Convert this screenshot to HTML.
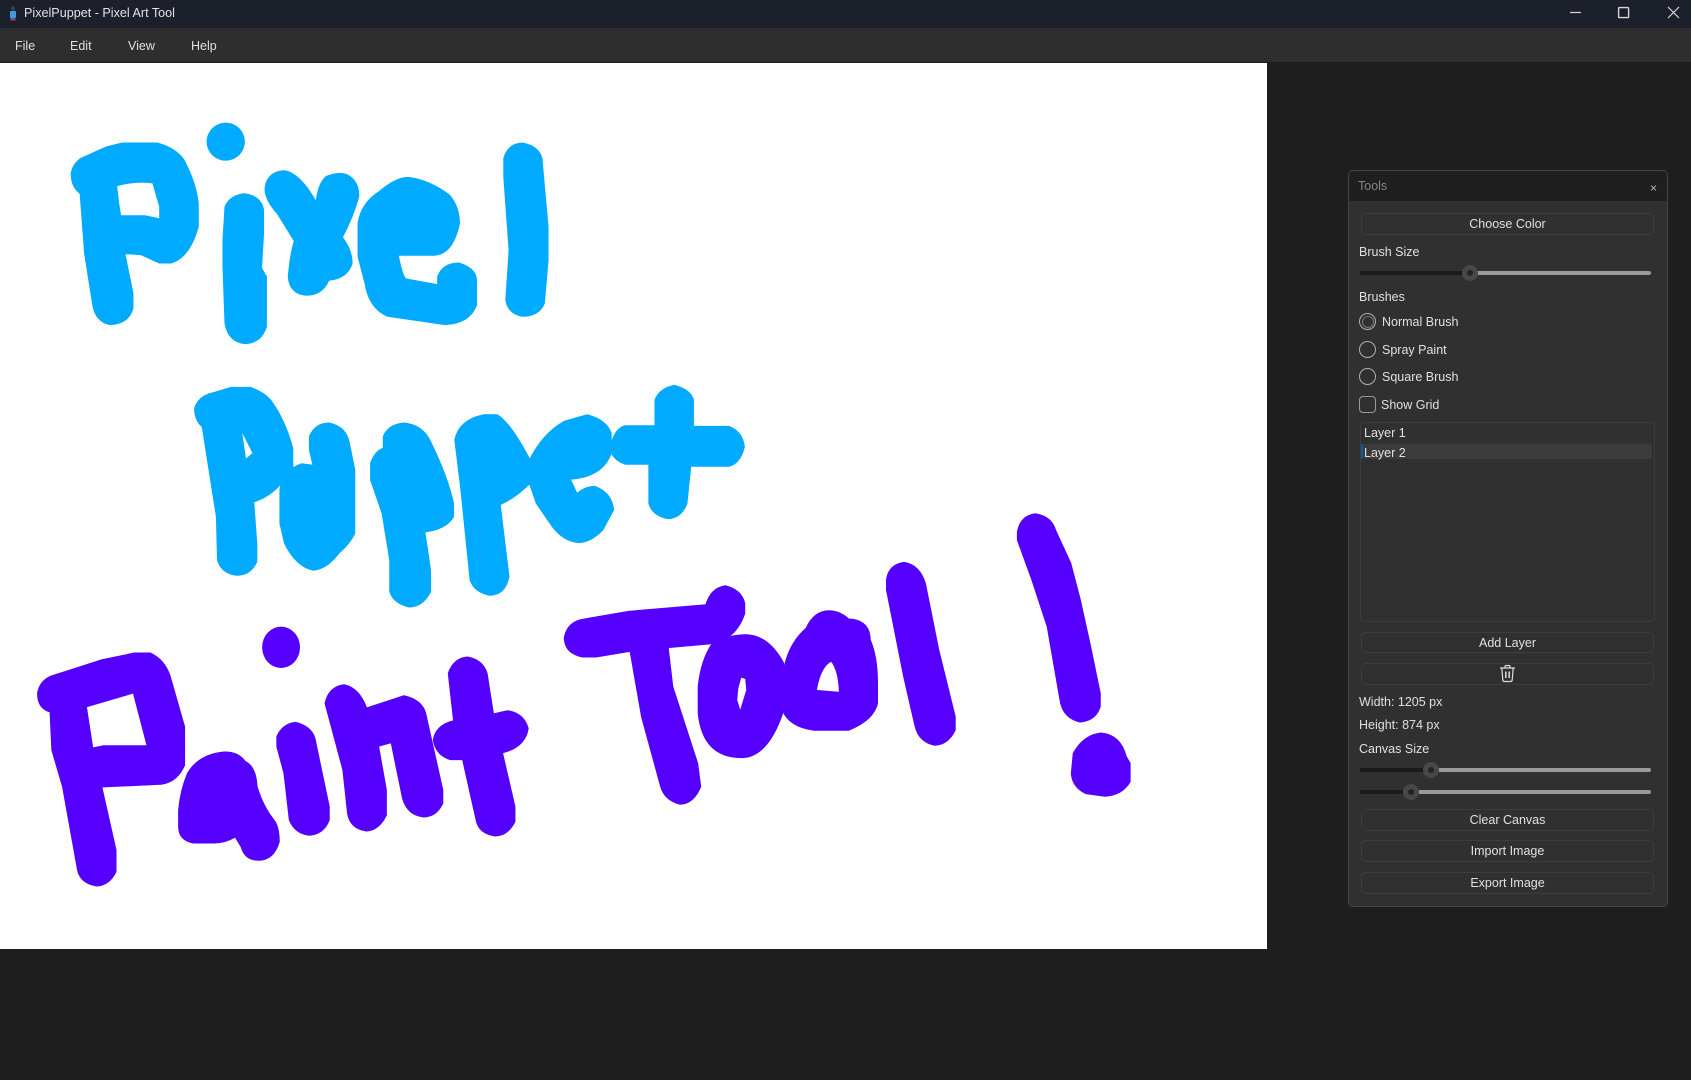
<!DOCTYPE html>
<html><head><meta charset="utf-8"><title>PixelPuppet - Pixel Art Tool</title>
<style>
html,body{margin:0;padding:0;width:1691px;height:1080px;overflow:hidden;background:#1e1e1e}
body{position:relative;font-family:"Liberation Sans",sans-serif;font-size:12.5px;color:#e0e0e0}
.a{position:absolute}
.t{position:absolute;line-height:18px;height:18px;white-space:nowrap}
.b{position:absolute;left:1361px;width:291px;border:1px solid #3d3d3d;border-radius:5px;text-align:center;box-sizing:content-box;background:#303030;color:#e0e0e0}
.r{position:absolute;left:1359px;width:15px;height:15px;border:1.5px solid #b0b0b0;border-radius:50%}
.g1{position:absolute;height:4px;background:#1b1b1b}
.g2{position:absolute;height:4px;background:#9a9a9a;border-radius:2px}
.th{position:absolute;width:16px;height:16px;border-radius:50%;background:#484848}
.th:after{content:"";position:absolute;left:5px;top:5px;width:6px;height:6px;border-radius:50%;background:#232323}
svg.c path{vector-effect:non-scaling-stroke;stroke-width:1.6;stroke-linejoin:round}
</style></head><body>
<div class="a" style="left:0;top:0;width:1691px;height:28px;background:#1b202b"></div>
<svg class="a" style="left:7px;top:5px" width="12" height="18" viewBox="0 0 12 18"><circle cx="6" cy="3.5" r="2.2" fill="#3a3f4a"/><rect x="3" y="6" width="6" height="7" rx="1" fill="#3d9be8"/><rect x="3.5" y="13" width="5" height="2.5" fill="#8a4a70"/></svg>
<div class="t" style="left:24px;top:4px;color:#e2e2e2;font-size:12.6px">PixelPuppet - Pixel Art Tool</div>
<svg class="a" style="left:1560px;top:0" width="131" height="28" viewBox="0 0 131 28" fill="none" stroke="#d8d8d8"><path d="M10 12.5H21" stroke-width="1.2"/><rect x="58.6" y="7.6" width="10" height="10" rx="1" stroke-width="1.4"/><path d="M108 7L119 18M119 7L108 18" stroke-width="1.2"/></svg>
<div class="a" style="left:0;top:28px;width:1691px;height:34px;background:#2e2e2e"></div>
<div class="a" style="left:0;top:62px;width:1691px;height:1px;background:#1a1a1a"></div>
<div class="t" style="left:15px;top:37px">File</div>
<div class="t" style="left:70px;top:37px">Edit</div>
<div class="t" style="left:128px;top:37px">View</div>
<div class="t" style="left:191px;top:37px">Help</div>

<svg class="a c" style="left:0;top:63px" width="1267" height="886" viewBox="0 63 1267 886">
<rect x="0" y="63" width="1267" height="886" fill="#fff"/>
<g transform="translate(0 60) scale(.40816 .33333)" fill="#00aaff" stroke="#00aaff" fill-rule="evenodd">
<path d="M300 250H385Q430 265 450 300Q480 370 485 430V500Q465 590 420 608H390L345 583L305 580L325 700V745Q315 790 270 793Q235 785 228 735L208 580L197 400Q175 380 175 340Q180 310 200 295L260 262ZM285 377Q330 360 375 368L392 440V478L355 468H295L290 430Z"/>
<ellipse cx="553" cy="245" rx="47" ry="57" stroke="none"/>
<path d="M600 402Q640 410 645 450V520L640 625L652 650V800Q640 848 600 850Q560 845 552 790L547 620V540L552 440Q565 405 600 402Z"/>
<path d="M697 333Q735 340 775 428Q780 370 800 350Q830 335 850 345Q880 365 878 410Q865 470 838 532Q862 570 862 610Q850 655 805 660Q790 705 750 705Q710 700 707 650Q712 580 722 543L680 460Q650 420 650 385Q655 335 697 333Z"/>
<path d="M1000 353Q1050 360 1100 405Q1125 440 1125 490Q1110 580 1065 585H975Q985 650 995 658L1073 675V650Q1085 610 1125 610Q1165 625 1167 660V735Q1150 790 1090 793L950 768Q905 745 895 670L878 590V490Q885 430 930 395Q970 353 1000 353Z"/>
<path d="M1280 250Q1320 260 1327 295L1342 500V600L1333 730Q1320 768 1280 768Q1245 760 1240 720L1248 570L1235 350V295Q1245 252 1280 250Z"/>
</g>
<g transform="translate(170 370) scale(.38271 .33333)" fill="#00aaff" stroke="#00aaff" fill-rule="evenodd">
<path d="M160 53H210Q250 70 265 95Q300 150 320 235V340L290 340Q260 380 218 395L226 520V575Q210 615 175 615Q135 610 125 570L122 440L85 170Q65 150 65 115Q75 80 110 70ZM185 175L218 250L197 270Z"/>
<path d="M345 282L375 287L365 240V200Q380 160 415 160Q460 170 468 220L482 300V490Q470 520 440 550Q410 595 375 600Q330 590 300 520L288 460V360Q295 300 345 282Z"/>
<path d="M610 160Q660 165 680 215Q725 320 740 400V440Q720 478 665 485L680 600V665Q660 710 625 710Q585 700 575 665V570L555 430L525 330V280Q535 245 558 235V200Q570 165 610 160Z"/>
<path d="M820 135H855Q890 160 940 270L940 340Q900 385 862 403L885 620Q875 675 835 675Q795 665 785 630L760 350L745 210Q755 150 820 135Z"/>
<path d="M1090 135Q1140 150 1152 190V250Q1130 320 1045 327L1063 372Q1085 350 1110 350Q1155 370 1158 420L1130 480Q1100 515 1070 517Q1030 515 1000 470L958 400L940 340V270Q975 190 1030 155Z"/>
<path d="M1318 47Q1360 60 1367 90V170H1460Q1495 185 1500 230Q1490 280 1460 288H1360L1350 400Q1335 445 1300 445Q1260 435 1252 400V282H1190Q1160 270 1150 240Q1160 175 1190 168H1268V90Q1280 55 1318 47Z"/>
</g>
<g transform="translate(20 610) scale(.35714 .33333)" fill="#5500ff" stroke="#5500ff" fill-rule="evenodd">
<path d="M320 130H365Q405 150 420 200L460 350V465Q440 515 395 522L228 530L268 720V785Q250 825 215 827Q170 820 162 780L120 530L90 420L85 305Q50 295 50 250Q55 215 85 200L230 150ZM185 290L318 248L357 408H235L203 415Z"/>
<ellipse cx="731" cy="112" rx="53" ry="62" stroke="none"/>
<path d="M570 427Q610 425 630 455Q660 470 663 530Q680 590 710 630Q725 650 725 695Q710 750 668 750Q630 750 620 710L603 680Q570 700 540 698H485Q445 690 445 650V600Q450 540 470 490Q500 435 570 427Z"/>
<path d="M772 338Q815 350 825 385L865 590V630Q850 672 810 675Q770 670 755 630L740 490L720 410V380Q735 342 772 338Z"/>
<path d="M908 225Q950 235 970 295L1075 258Q1125 270 1135 310L1183 540V580Q1165 620 1130 620Q1085 615 1072 565L1040 397L1003 408L1025 540V615Q1005 660 970 662Q925 655 918 610L905 480L855 280Q865 230 908 225Z"/>
<path d="M1253 142Q1295 150 1307 190L1325 313L1365 303Q1410 310 1422 355Q1415 410 1350 428L1385 590V635Q1365 677 1330 677Q1285 670 1278 630L1240 448H1205Q1165 435 1158 390Q1165 345 1215 333L1200 190Q1215 145 1253 142Z"/>
</g>
<g transform="translate(550 500) scale(.38271 .33333)" fill="#5500ff" stroke="#5500ff" fill-rule="evenodd">
<path d="M458 258Q500 270 508 310V340Q495 385 468 408L425 430L308 442L320 560L385 790L393 860Q375 910 340 912Q300 900 290 860L240 650L210 453L120 470H85Q40 460 38 415Q45 365 90 358L205 335L408 315Q420 265 458 258Z"/>
<path d="M510 405Q570 405 610 490L610 630Q570 772 500 772Q400 772 388 640L388 560Q395 480 425 430Q470 405 510 405ZM498 530L512 535L515 570L497 637L487 600L490 565Z"/>
<path d="M730 333Q760 335 780 358Q835 360 836 420Q855 470 855 550V610Q845 660 780 690H690Q625 680 608 630V540Q615 440 670 385Q690 333 730 333ZM735 482Q755 510 757 578L695 572Q705 500 735 482Z"/>
<path d="M925 188Q965 195 980 250L1015 450L1058 650V690Q1040 733 1005 735Q965 725 955 680L925 530L880 270V240Q885 195 925 188Z"/>
<path d="M1268 42Q1310 50 1320 90L1360 190L1385 300L1410 430L1437 580V620Q1425 662 1385 665Q1345 655 1335 610L1300 380L1260 240L1222 120V95Q1230 48 1268 42Z"/>
<path d="M1440 700Q1490 705 1505 770L1515 790V845Q1495 885 1450 888L1400 880Q1365 860 1363 820L1368 760Q1395 705 1440 700Z"/>
</g>
</svg>

<div class="a" style="left:1348px;top:170px;width:318px;height:735px;background:#303030;border:1px solid #454545;border-radius:5px;box-sizing:content-box"></div>
<div class="a" style="left:1349px;top:171px;width:318px;height:30px;background:#1f1f1f;border-radius:4px 4px 0 0"></div>
<div class="t" style="left:1358px;top:177px;color:#858585">Tools</div>
<div class="t" style="left:1650px;top:179px;color:#bbb;font-size:12px">×</div>

<div class="b" style="top:213px;height:20px;line-height:21px">Choose Color</div>
<div class="t" style="left:1359px;top:243px">Brush Size</div>
<div class="g1" style="left:1360px;top:271px;width:102px"></div>
<div class="g2" style="left:1476px;top:271px;width:175px"></div>
<div class="th" style="left:1462px;top:265px"></div>
<div class="t" style="left:1359px;top:288px">Brushes</div>
<div class="r" style="top:313px"></div>
<div class="a" style="left:1362px;top:316px;width:10px;height:10px;border:1.5px solid #777;border-radius:50%"></div>
<div class="t" style="left:1382px;top:313px">Normal Brush</div>
<div class="r" style="top:341px"></div>
<div class="t" style="left:1382px;top:341px">Spray Paint</div>
<div class="r" style="top:368px"></div>
<div class="t" style="left:1382px;top:368px">Square Brush</div>
<div class="a" style="left:1359px;top:396px;width:15px;height:15px;border:1.5px solid #999;border-radius:4px"></div>
<div class="t" style="left:1381px;top:396px">Show Grid</div>

<div class="a" style="left:1360px;top:422px;width:293px;height:198px;border:1px solid #3c3c3c;border-radius:4px"></div>
<div class="t" style="left:1364px;top:424px">Layer 1</div>
<div class="a" style="left:1362px;top:444px;width:290px;height:15px;background:#3b3b3b;border-radius:3px"></div>
<div class="a" style="left:1361px;top:444px;width:2px;height:15px;background:#0f5a9e"></div>
<div class="t" style="left:1364px;top:444px">Layer 2</div>

<div class="b" style="top:632px;height:19px;line-height:20px">Add Layer</div>
<div class="b" style="top:663px;height:20px"></div>
<svg class="a" style="left:1499px;top:664px" width="17" height="19" viewBox="0 0 17 19" fill="none" stroke="#dedede" stroke-width="1.2"><path d="M1 4H16M6 4V2.5Q6 1.5 7 1.5H10Q11 1.5 11 2.5V4M2.8 4L3.8 16Q4 17.5 5.5 17.5H11.5Q13 17.5 13.2 16L14.2 4"/><path d="M6.8 7.5V14M10.2 7.5V14" stroke-width="1.5"/></svg>

<div class="t" style="left:1359px;top:693px">Width: 1205 px</div>
<div class="t" style="left:1359px;top:716px">Height: 874 px</div>
<div class="t" style="left:1359px;top:740px">Canvas Size</div>
<div class="g1" style="left:1360px;top:768px;width:63px"></div>
<div class="g2" style="left:1438px;top:768px;width:213px"></div>
<div class="th" style="left:1423px;top:762px"></div>
<div class="g1" style="left:1360px;top:790px;width:43px"></div>
<div class="g2" style="left:1418px;top:790px;width:233px"></div>
<div class="th" style="left:1403px;top:784px"></div>

<div class="b" style="top:809px;height:20px;line-height:20px">Clear Canvas</div>
<div class="b" style="top:840px;height:20px;line-height:21px">Import Image</div>
<div class="b" style="top:872px;height:20px;line-height:21px">Export Image</div>
</body></html>
